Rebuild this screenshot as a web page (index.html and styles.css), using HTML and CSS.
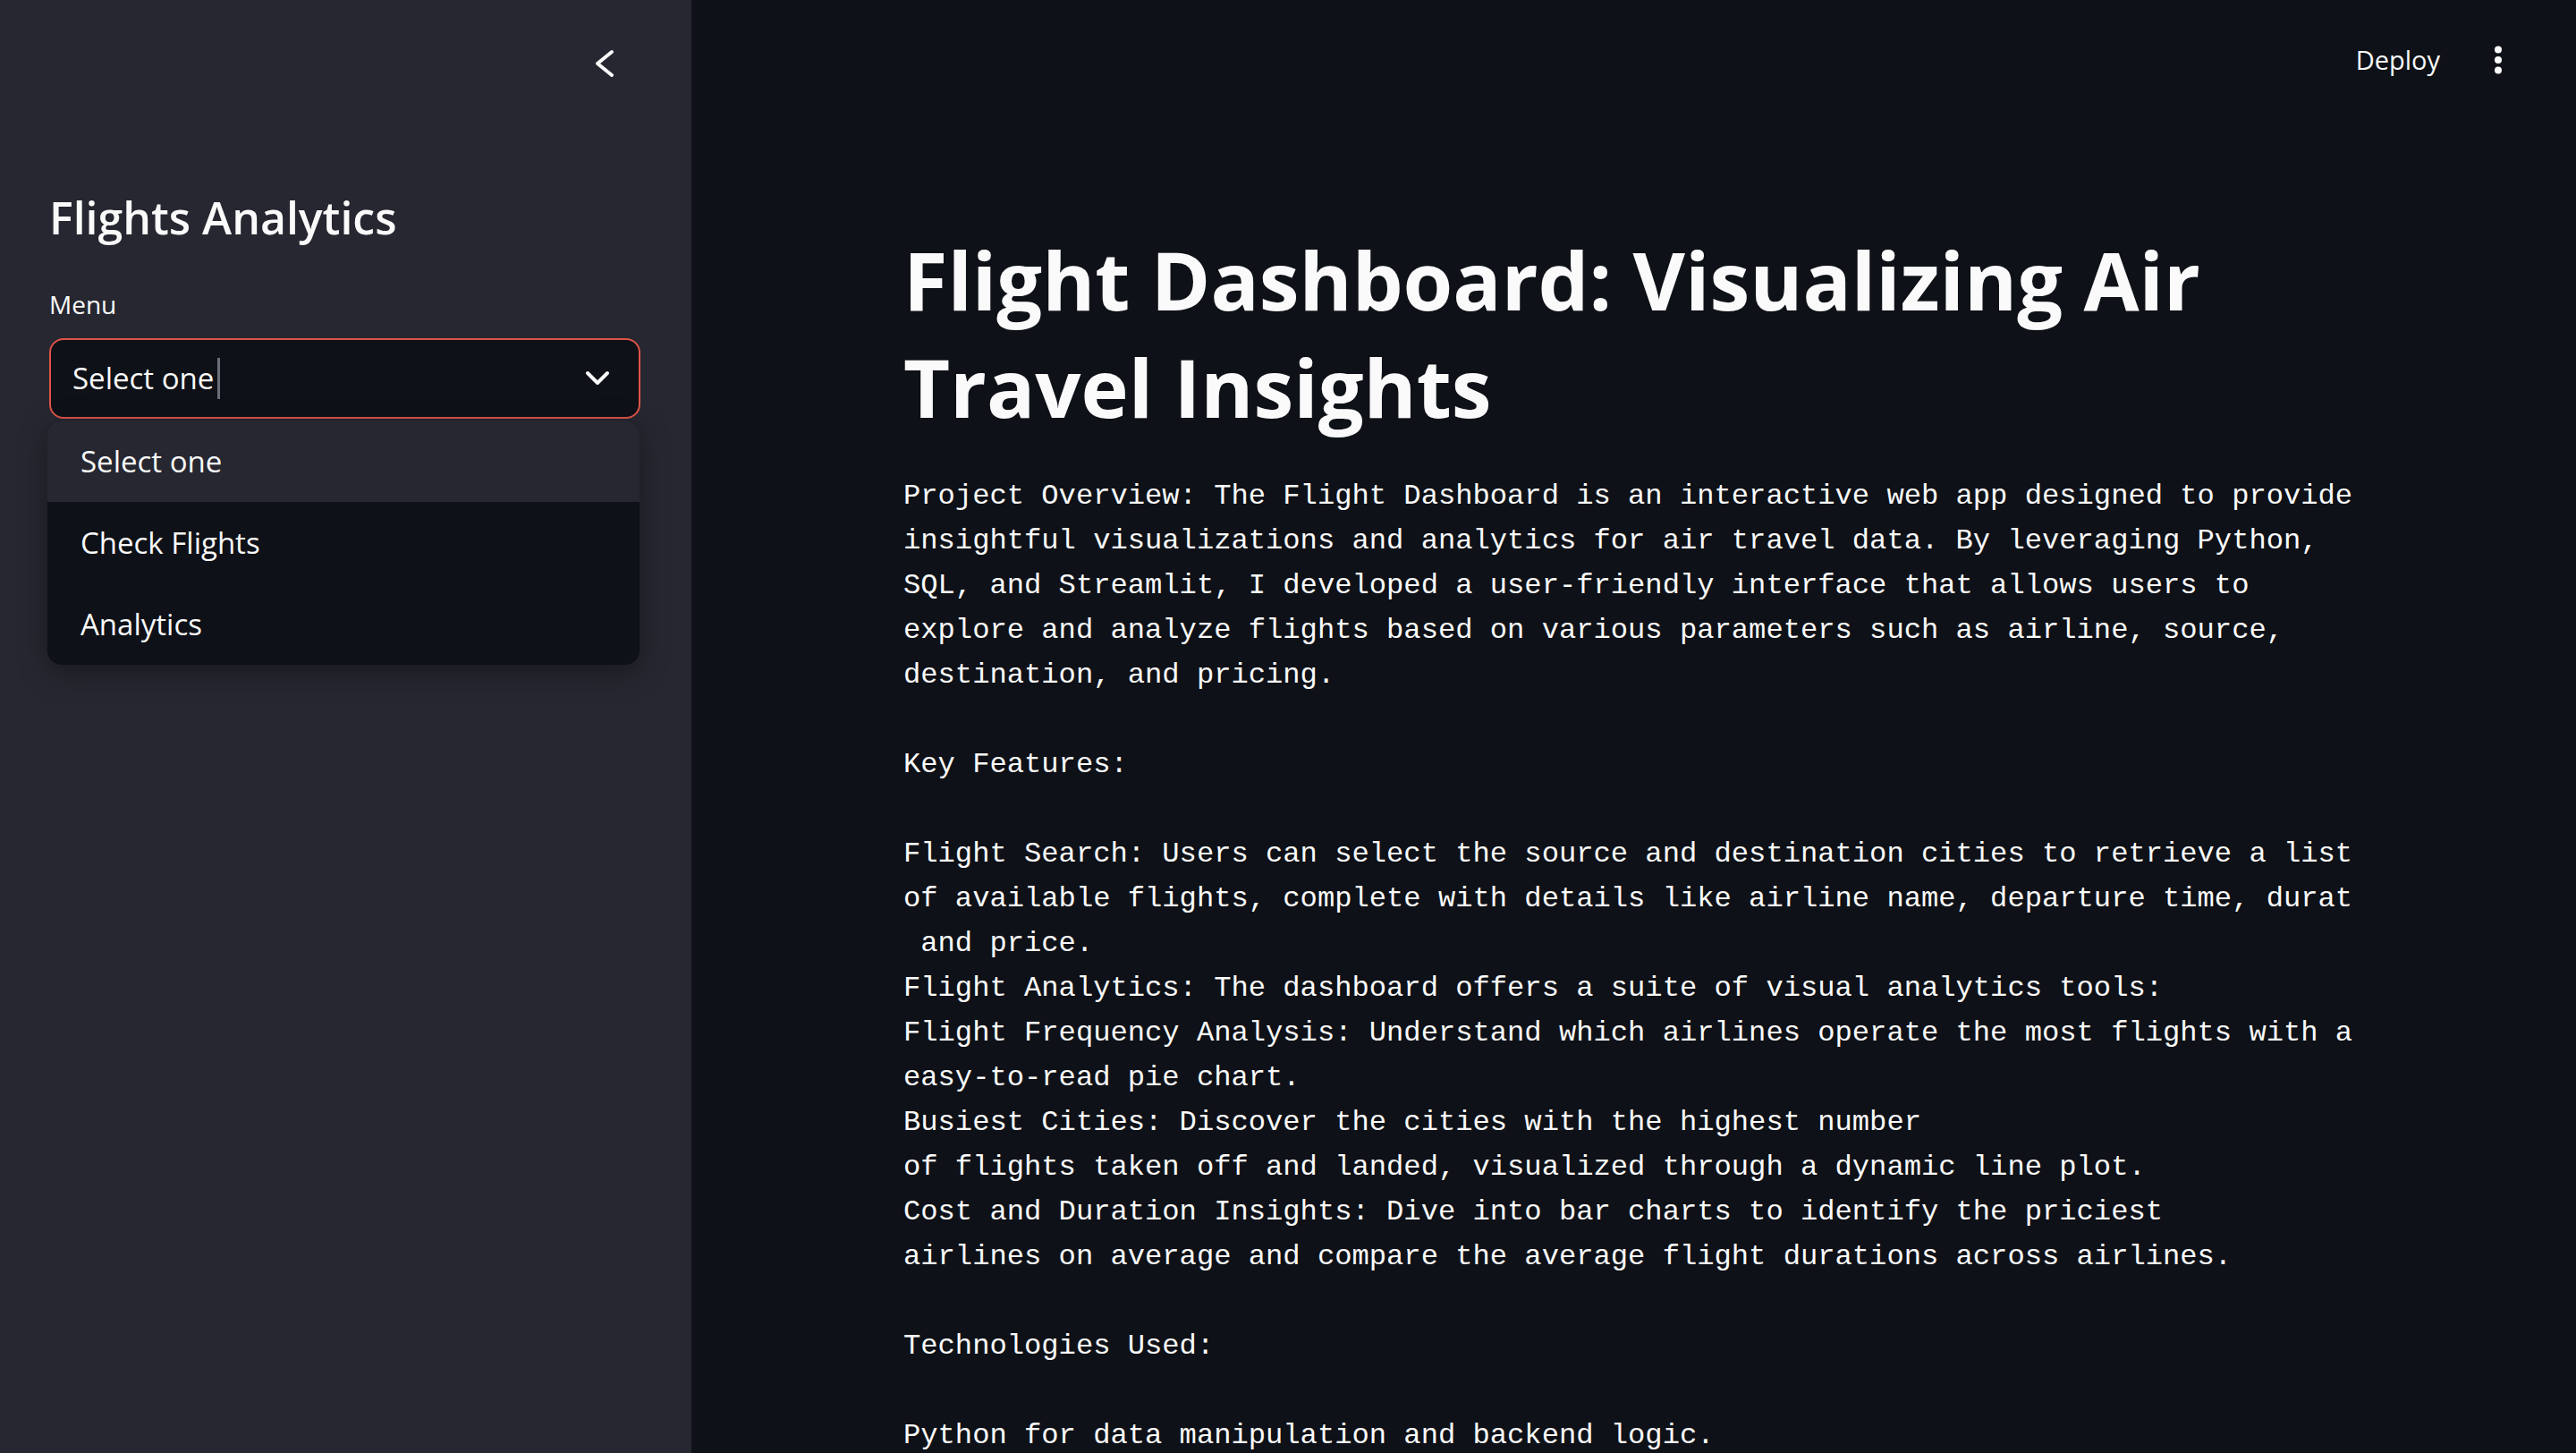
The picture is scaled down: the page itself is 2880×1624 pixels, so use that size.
FILE: index.html
```html
<!DOCTYPE html>
<html lang="en">
<head>
<meta charset="utf-8">
<title>Flight Dashboard</title>
<link rel="stylesheet" href="styles.css">
</head>
<body>
<div class="app">
  <aside class="sidebar">
    <div class="sidebar-top">
      <svg class="collapse" width="24" height="32" viewBox="0 0 24 32"><path d="M20 3 L4 16 L20 29" fill="none" stroke="#fafafa" stroke-width="4" stroke-linecap="round" stroke-linejoin="round"/></svg>
    </div>
    <h1 class="side-title">Flights Analytics</h1>
    <div class="label">Menu</div>
    <div class="select-wrap">
      <div class="select">
        <span class="select-value">Select one</span><span class="caret"></span>
        <svg class="chev" width="28" height="18" viewBox="0 0 28 18"><path d="M3 3 L14 14 L25 3" fill="none" stroke="#fafafa" stroke-width="4" stroke-linecap="round" stroke-linejoin="round"/></svg>
      </div>
      <ul class="menu">
        <li class="item active">Select one</li>
        <li class="item">Check Flights</li>
        <li class="item">Analytics</li>
      </ul>
    </div>
  </aside>
  <main class="main">
    <header class="topbar">
      <span class="deploy">Deploy</span>
      <svg class="kebab" width="8" height="32" viewBox="0 0 8 32"><circle cx="4" cy="4.5" r="4" fill="#fafafa"/><circle cx="4" cy="16" r="4" fill="#fafafa"/><circle cx="4" cy="27.5" r="4" fill="#fafafa"/></svg>
    </header>
    <section class="content">
      <h1 class="title">Flight Dashboard: Visualizing Air Travel Insights</h1>
      <pre class="mono">Project Overview: The Flight Dashboard is an interactive web app designed to provide
insightful visualizations and analytics for air travel data. By leveraging Python,
SQL, and Streamlit, I developed a user-friendly interface that allows users to
explore and analyze flights based on various parameters such as airline, source,
destination, and pricing.

Key Features:

Flight Search: Users can select the source and destination cities to retrieve a list
of available flights, complete with details like airline name, departure time, durat
 and price.
Flight Analytics: The dashboard offers a suite of visual analytics tools:
Flight Frequency Analysis: Understand which airlines operate the most flights with a
easy-to-read pie chart.
Busiest Cities: Discover the cities with the highest number
of flights taken off and landed, visualized through a dynamic line plot.
Cost and Duration Insights: Dive into bar charts to identify the priciest
airlines on average and compare the average flight durations across airlines.

Technologies Used:

Python for data manipulation and backend logic.</pre>
    </section>
  </main>
</div>
</body>
</html>
```
FILE: styles.css
```css
* { box-sizing: border-box; }
html, body { margin: 0; padding: 0; }
body {
  background: #0e1117;
  color: #fafafa;
  font-family: "Open Sans", "Noto Sans", sans-serif;
}
.app {
  display: flex;
  width: 2880px;
  height: 1624px;
  overflow: hidden;
}
.sidebar {
  flex: none;
  width: 773px;
  background: #262730;
  padding: 0 57px 0 55px;
}
.sidebar-top {
  height: 142px;
  display: flex;
  justify-content: flex-end;
  align-items: center;
  padding-right: 28px;
}
.collapse { display: block; }
.side-title {
  margin: 70px 0 0 0;
  font-size: 50px;
  line-height: 62px;
  font-weight: 600;
}
.label {
  margin-top: 49px;
  font-size: 28px;
  line-height: 35px;
}
.select-wrap {
  position: relative;
  margin-top: 20px;
}
.select {
  height: 90px;
  border: 2px solid #e0534a;
  border-radius: 16px;
  background: #0e1117;
  display: flex;
  align-items: center;
  padding: 0 32px 0 24px;
}
.select-value {
  font-size: 33px;
  line-height: 40px;
}
.caret {
  width: 3px;
  height: 46px;
  background: #6b6e78;
  margin-left: 4px;
}
.chev { margin-left: auto; display: block; }
.menu {
  position: absolute;
  top: 92px;
  left: -2px;
  width: 662px;
  margin: 0;
  padding: 0;
  list-style: none;
  background: #0e1117;
  border-radius: 16px;
  overflow: hidden;
  box-shadow: 0 8px 32px rgba(0, 0, 0, 0.35);
}
.item {
  height: 91px;
  display: flex;
  align-items: center;
  padding-left: 37px;
  font-size: 33px;
  line-height: 40px;
}
.item.active { background: #262730; }

.main {
  flex: 1;
  display: flex;
  flex-direction: column;
  min-width: 0;
}
.topbar {
  flex: none;
  height: 134px;
  display: flex;
  justify-content: flex-end;
  align-items: center;
  padding-right: 83px;
}
.deploy {
  font-size: 29px;
  line-height: 40px;
  margin-right: 61px;
}
.kebab { display: block; }
.content {
  flex: none;
  margin-left: 237px;
  width: 1640px;
  padding-top: 118px;
}
.title {
  margin: 0;
  font-size: 90px;
  line-height: 120px;
  font-weight: 700;
}
.mono {
  margin: 38px 0 0 0;
  font-family: "Liberation Mono", monospace;
  font-size: 32.15px;
  line-height: 50px;
  white-space: pre;
  color: #fafafa;
}
```
